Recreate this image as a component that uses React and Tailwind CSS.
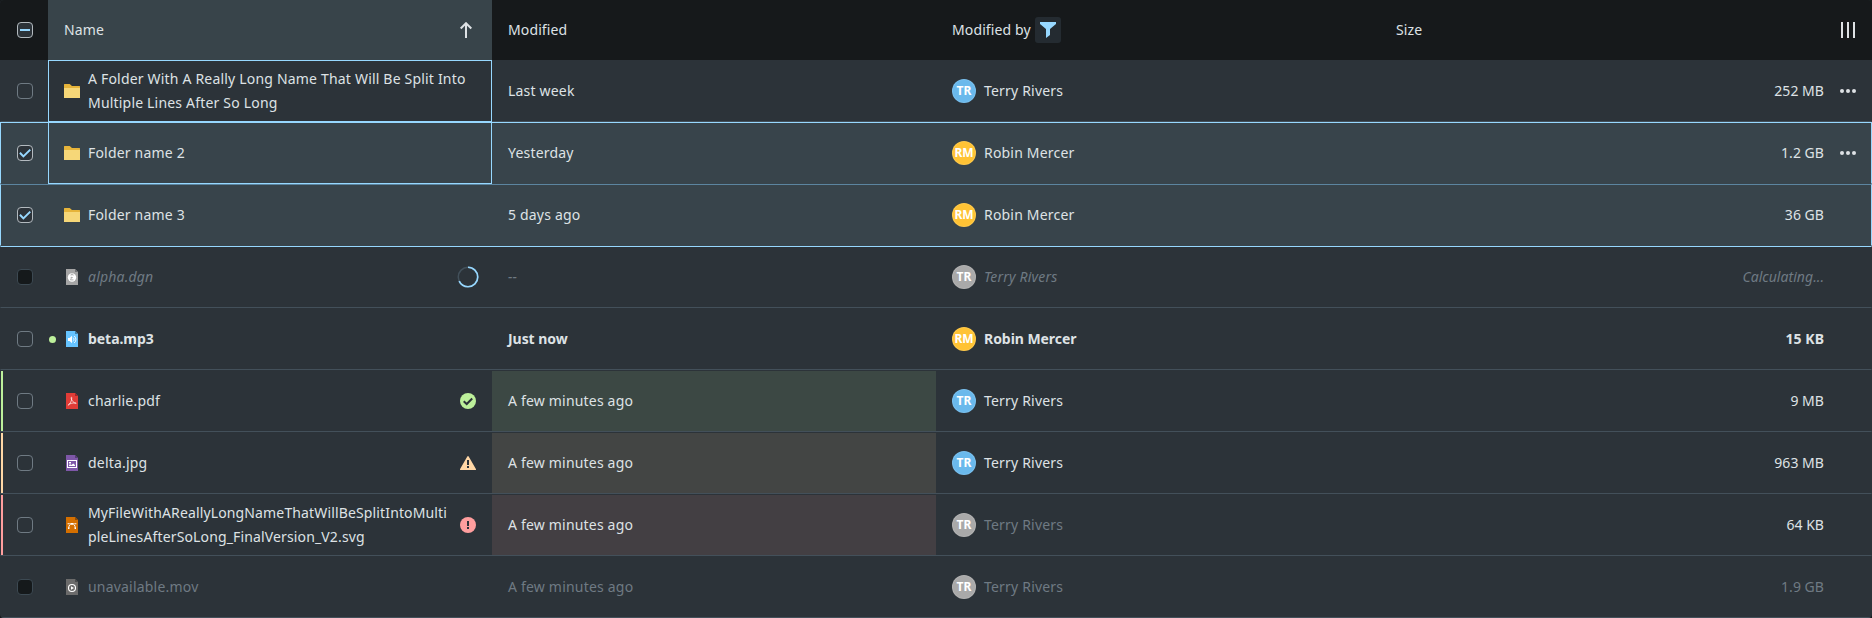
const FILES = {
  dgn: { body: "#a5a5a5", fold: "#6f7173" },
  mp3: { body: "#66c4ff", fold: "#3f7fa8" },
  pdf: { body: "#e13c37", fold: "#97292a" },
  jpg: { body: "#7e57a8", fold: "#553d74" },
  svg: { body: "#d46f00", fold: "#8f4d08" },
  mov: { body: "#6b6b6b", fold: "#494b4c" },
};

function Glyph({ type }) {
  switch (type) {
    case "dgn":
      return (
        <g>
          <circle cx="8" cy="8.5" r="4.2" fill="#fff" />
          <path d="M7 6.6a1.1 1.1 0 1 1 2.1 0M6.6 10.8c.5-.8.8-2 .6-3M6.3 10.9h3.2M7 8.6h1.8" fill="none" stroke="#a5a5a5" strokeWidth=".9" />
        </g>
      );
    case "mp3":
      return (
        <g>
          <path d="M4 7h1.6L8 4.8v7.4L5.6 10H4z" fill="#fff" />
          <path d="M9 6.6a2.4 2.4 0 0 1 0 3.8M10.2 5a4.4 4.4 0 0 1 0 7" fill="none" stroke="#fff" strokeWidth=".9" />
        </g>
      );
    case "pdf":
      return (
        <path d="M4.200 12.200C6 11 7.900 7.900 7.800 4.800c-.1-1-.9-.6-.7.300.4 2.400 2.400 4.900 4.800 5.200M4.600 11.700c1.800-1.500 4.400-2.100 7.200-1.600" fill="none" stroke="#fff" strokeWidth=".8" strokeLinecap="round" opacity=".85" />
      );
    case "jpg":
      return (
        <g>
          <rect x="3.500" y="5.500" width="9" height="7" fill="none" stroke="#fff" />
          <rect x="5" y="7" width="2" height="1.500" fill="#fff" />
          <path d="M5 11V9.800l1.400-.6 1.100.7L9.200 8.600 11 10v1z" fill="#fff" />
        </g>
      );
    case "svg":
      return (
        <g fill="none" stroke="#fff">
          <path d="M4.700 11.500c0-3 1.300-4.700 3.300-4.700s3.300 1.700 3.300 4.700" strokeWidth="1" />
          <path d="M4 6.700h8" strokeWidth=".7" />
          <path d="M7 6h2v1.600H7zM4 10.600h1.400V12H4zM10.600 10.600H12V12h-1.400z" fill="#fff" stroke="none" />
          <path d="M3.600 6.200h1v1h-1zM11.400 6.200h1v1h-1z" fill="#fff" stroke="none" />
        </g>
      );
    default:
      return (
        <g>
          <circle cx="8" cy="9" r="3.500" fill="none" stroke="#fff" strokeWidth="1.100" />
          <path d="M7 7.200 10 9l-3 1.800z" fill="#fff" />
        </g>
      );
  }
}

function ItemIcon({ type }) {
  if (type === "folder") {
    return (
      <svg viewBox="0 0 16 16" className="size-4 shrink-0">
        <path d="M0 5V1.500A.5.500 0 0 1 .5 1h5.200L8 3h7.500a.5.500 0 0 1 .5.500V5z" fill="#e6b43a" />
        <path d="M0 5h16v9.500a.5.500 0 0 1-.5.500H.5a.5.500 0 0 1-.5-.5z" fill="#f6d778" />
      </svg>
    );
  }
  const c = FILES[type];
  return (
    <svg viewBox="0 0 16 16" className="size-4 shrink-0">
      <path d="M2 0h9l3 3v13H2z" fill={c.body} />
      <path d="M11 0l3 3h-3z" fill={c.fold} />
      <Glyph type={type} />
    </svg>
  );
}

function StatusIcon({ type }) {
  if (type === "loading") {
    return (
      <svg viewBox="0 0 22 22" className="size-[22px] shrink-0 -mr-[3px]" fill="none">
        <circle cx="11" cy="11" r="9.750" stroke="#42505a" strokeWidth="1.500" />
        <circle cx="11" cy="11" r="9.750" stroke="#97d8ff" strokeWidth="1.700" pathLength="100" strokeDasharray="68 100" transform="rotate(-90 11 11)" />
      </svg>
    );
  }
  if (type === "success") {
    return (
      <svg viewBox="0 0 16 16" className="size-4 shrink-0">
        <circle cx="8" cy="8" r="8" fill="#bdf09b" />
        <path d="M3.700 8.300 6.700 11l5.500-5.500" fill="none" stroke="#2c3339" strokeWidth="2" />
      </svg>
    );
  }
  if (type === "warning") {
    return (
      <svg viewBox="0 0 16 16" className="size-4 shrink-0">
        <path d="M7.300 1.400a.8.800 0 0 1 1.400 0l7.200 12.700a.6.600 0 0 1-.5.900H.6a.6.600 0 0 1-.5-.9z" fill="#ffd7a6" />
        <path d="M7 5h2v5H7zM7 11h2v2H7z" fill="#2c3339" />
      </svg>
    );
  }
  return (
    <svg viewBox="0 0 16 16" className="size-4 shrink-0">
      <circle cx="8" cy="8" r="8" fill="#ff9e9e" />
      <path d="M7 4h2v5H7zM7 10h2v2H7z" fill="#2c3339" />
    </svg>
  );
}

function Checkbox({ state }) {
  const look =
    state === "disabled"
      ? "bg-[#15191b] border-[#3c4952]"
      : state === "checked" || state === "mixed"
        ? "bg-[#2c3339] border-[#b3babf]"
        : "bg-[#2c3339] border-[#6f7a83]";
  return (
    <span className={`flex size-4 items-center justify-center rounded-[4px] border ${look}`}>
      {state === "checked" && (
        <svg viewBox="0 0 14 14" className="size-[14px] shrink-0" fill="none">
          <path d="M1.900 6.800 5.400 10.400 12.300 3.600" stroke="#97d8ff" strokeWidth="2" />
        </svg>
      )}
      {state === "mixed" && <span className="h-0.5 w-2.5 bg-[#97d8ff]" />}
    </span>
  );
}

const ROWS = [
  { check: "off", icon: "folder", name: "A Folder With A Really Long Name That Will Be Split Into Multiple Lines After So Long", when: "Last week", who: "TR", size: "252 MB", active: true, menu: true },
  { check: "checked", icon: "folder", name: "Folder name 2", when: "Yesterday", who: "RM", size: "1.2 GB", active: true, menu: true, edge: "border-t-[#97d8ff] border-x-[#97d8ff] border-b-[#38444b] bg-[#38444b]" },
  { check: "checked", icon: "folder", name: "Folder name 3", when: "5 days ago", who: "RM", size: "36 GB", edge: "border-t-[#5c85a0] border-x-[#97d8ff] border-b-[#38444b] bg-[#38444b]" },
  { check: "disabled", icon: "dgn", name: "alpha.dgn", when: "--", who: "TR", size: "Calculating...", status: "loading", tone: "italic text-[#6f7a83] tracking-[0.2px]", muted: true, edge: "border-t-[#97d8ff] border-x-transparent border-b-[#43505a]" },
  { check: "off", icon: "mp3", name: "beta.mp3", when: "Just now", who: "RM", size: "15 KB", tone: "font-bold text-[#dee2e5] tracking-[-0.05px]", unread: true },
  { check: "off", icon: "pdf", name: "charlie.pdf", when: "A few minutes ago", who: "TR", size: "9 MB", status: "success", stripe: "border-[#bdf09b]", tint: "bg-[#3c4844]" },
  { check: "off", icon: "jpg", name: "delta.jpg", when: "A few minutes ago", who: "TR", size: "963 MB", status: "warning", stripe: "border-[#ffd7a6]", tint: "bg-[#434544]" },
  { check: "off", icon: "svg", name: "MyFileWithAReallyLongNameThatWillBeSplitIntoMultipleLinesAfterSoLong_FinalVersion_V2.svg", when: "A few minutes ago", who: "TR", size: "64 KB", status: "error", stripe: "border-[#ff9e9e]", tint: "bg-[#433f43]", nameTone: "tracking-[0.14px]", muted: true },
  { check: "disabled", icon: "mov", name: "unavailable.mov", when: "A few minutes ago", who: "TR", size: "1.9 GB", tone: "text-[#6f7a83] tracking-[0.2px]", muted: true },
];

const PEOPLE = {
  TR: { name: "Terry Rivers", color: "bg-[#6ab9ec]" },
  RM: { name: "Robin Mercer", color: "bg-[#ffc335]" },
};

function Row({ row }) {
  const person = PEOPLE[row.who];
  return (
    <div className={`grid h-[62px] grid-cols-[47px_444px_444px_444px_1fr_47px] border ${row.edge || "border-x-transparent border-t-transparent border-b-[#43505a]"} ${row.tone || "tracking-[0.19px]"}`}>
      <div className={`flex items-center ${row.stripe ? `border-l-2 pl-3.5 ${row.stripe}` : "pl-4"}`}>
        <Checkbox state={row.check} />
      </div>
      <div className={`relative flex items-center gap-2 ${row.active ? "-my-px border border-[#97d8ff] px-[15px]" : "px-4"}`}>
        {row.unread && <span className="absolute left-px size-[7px] rounded-full bg-[#bdf09b]" />}
        <ItemIcon type={row.icon} />
        <span className={`min-w-0 flex-1 leading-6 wrap-anywhere ${row.nameTone || ""}`}>{row.name}</span>
        {row.status && <StatusIcon type={row.status} />}
      </div>
      <div className={`flex items-center px-4 ${row.tint || ""}`}>{row.when}</div>
      <div className="flex items-center gap-2 px-4">
        <span className={`flex size-6 items-center justify-center rounded-full border border-white/10 text-xs font-bold tracking-normal not-italic text-white ${row.muted ? "bg-[#a9a9a9]" : person.color}`}>
          {row.who}
        </span>
        <span className={row.muted ? "text-[#6f7a83]" : ""}>{person.name}</span>
      </div>
      <div className="flex items-center justify-end pl-4"><span className="tracking-[0.04px]">{row.size}</span></div>
      <div className="flex items-center justify-end pr-[15px]">
        {row.menu && (
          <svg viewBox="0 0 16 16" className="size-4" fill="#dee2e5">
            <circle cx="2" cy="8" r="2" />
            <circle cx="8" cy="8" r="2" />
            <circle cx="14" cy="8" r="2" />
          </svg>
        )}
      </div>
    </div>
  );
}

export default function App() {
  return (
    <div className="bg-[#16191b]">
      <div className="h-[618px] w-full overflow-hidden rounded bg-[#2c3339] font-['Noto_Sans',sans-serif] text-sm text-[#dee2e5]">
        <div className="grid h-[60px] grid-cols-[48px_444px_444px_444px_1fr_48px] bg-[#16191b] tracking-[0.12px]">
          <div className="flex items-center pl-[17px]"><Checkbox state="mixed" /></div>
          <div className="flex items-center justify-between bg-[#38444a] px-4">
            <span>Name</span>
            <svg viewBox="0 0 16 16" className="mr-[2px] size-4" fill="none" stroke="#dee2e5" strokeWidth="2">
              <path d="M8 16V1.500M2.700 6.500 8 1.200l5.300 5.300" />
            </svg>
          </div>
          <div className="flex items-center px-4">Modified</div>
          <div className="flex items-center gap-1 px-4">
            <span>Modified by</span>
            <span className="flex size-[26px] items-center justify-center rounded-[3px] bg-[#242b31]">
              <svg viewBox="0 0 16 16" className="size-4" fill="#97d8ff">
                <path d="M0 0h16v2l-6 5v6l-4 3V7L0 2z" />
              </svg>
            </span>
          </div>
          <div className="flex items-center px-4">Size</div>
          <div className="flex items-center justify-end pr-4">
            <svg viewBox="0 0 16 16" className="size-4" fill="#dee2e5">
              <path d="M1 0h2v16H1zM7 0h2v16H7zM13 0h2v16h-2z" />
            </svg>
          </div>
        </div>
        {ROWS.map((row) => (
          <Row key={row.name} row={row} />
        ))}
      </div>
    </div>
  );
}
